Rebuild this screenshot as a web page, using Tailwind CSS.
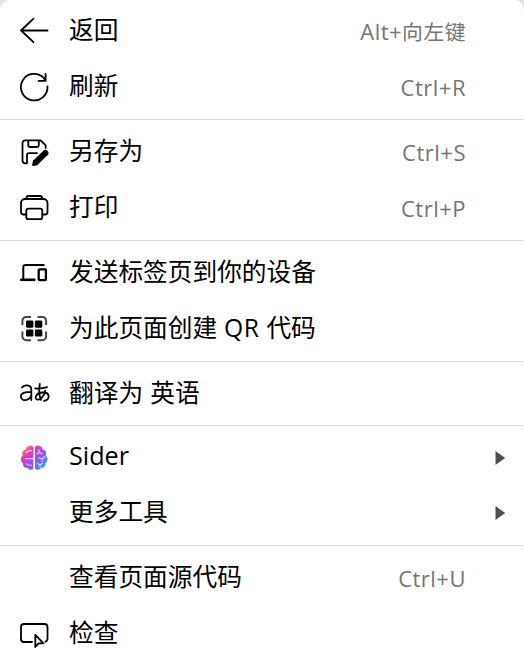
<!DOCTYPE html>
<html lang="zh-CN">
<head>
    <meta charset="UTF-8">
    <meta name="viewport" content="width=device-width, initial-scale=1.0">
    <title>右键菜单</title>
    <script src="https://cdn.jsdelivr.net/npm/@tailwindcss/browser@4"></script>
</head>
<body class="bg-[#e3e3e3] overflow-hidden">
    <div class="w-[524px] h-[661px] pt-0.5 bg-white rounded-t-[10px] overflow-hidden text-[24.7px] leading-[56px] text-black whitespace-nowrap font-['Open_Sans','Noto_Sans_CJK_SC',sans-serif]">
        <!-- Navegación -->
        <div class="flex h-14 pl-3.5 pr-[58px]">
            <svg class="w-10 h-14 mr-[15px]" viewBox="0 0 40 56" fill="none" stroke="#000" stroke-width="1.8" stroke-linecap="round" stroke-linejoin="round">
                <path d="M33.5 28.5H7M19.5 16.7L7 28.5L19.5 40.2"/>
            </svg>
            <span>返回</span>
            <span class="ml-auto pt-px text-[22px] tracking-[0.5px] text-[#757575]">Alt+<span class="text-[20.8px]">向左键</span></span>
        </div>
        <div class="flex h-14 pl-3.5 pr-[58px]">
            <svg class="w-10 h-14 mr-[15px]" viewBox="0 0 40 56" fill="none" stroke="#000" stroke-width="1.8" stroke-linecap="round" stroke-linejoin="round">
                <path d="M33.5 28.5A13.3 13.3 0 1 1 29.5 19.6L31.5 22.7M31.6 16V22.9H24.5"/>
            </svg>
            <span>刷新</span>
            <span class="ml-auto pt-px text-[22px] tracking-[0.5px] text-[#757575]">Ctrl+R</span>
        </div>
        <div class="h-px mt-[5px] mb-[3px] bg-[#d9d9d9]"></div>

        <!-- Guardar e imprimir -->
        <div class="flex h-14 pl-3.5 pr-[58px]">
            <svg class="w-10 h-14 mr-[15px]" viewBox="0 0 40 56" fill="none" stroke="#000" stroke-width="1.8" stroke-linecap="round" stroke-linejoin="round">
                <path d="M13 40.3H11.2A2.7 2.7 0 0 1 8.5 37.6V20A2.7 2.7 0 0 1 11.2 17.3H26.6L31.7 22.4V25M14.3 17.5V22.2A1.8 1.8 0 0 0 16.1 24H23A1.8 1.8 0 0 0 24.8 22.2V17.5M13 40V32.2A2 2 0 0 1 15 30.2H23"/>
                <path d="M22 39.2L31.4 30" stroke-width="6"/>
                <path d="M19 42L20 37.7L23.3 41Z" fill="#000"/>
            </svg>
            <span>另存为</span>
            <span class="ml-auto pt-px text-[22px] tracking-[0.5px] text-[#757575]">Ctrl+S</span>
        </div>
        <div class="flex h-14 pl-3.5 pr-[58px]">
            <svg class="w-10 h-14 mr-[15px]" viewBox="0 0 40 56" fill="none" stroke="#000" stroke-width="1.8" stroke-linecap="round" stroke-linejoin="round">
                <path d="M12.3 35.5H9.5A2.5 2.5 0 0 1 7 33V24A4 4 0 0 1 11 20H29.5A4 4 0 0 1 33.5 24V33A2.5 2.5 0 0 1 31 35.5H28.3M12.3 20V19.5A2.5 2.5 0 0 1 14.8 17H25.8A2.5 2.5 0 0 1 28.3 19.5V20"/>
                <rect x="12.3" y="29.7" width="16" height="10.5" rx="2.3"/>
            </svg>
            <span>打印</span>
            <span class="ml-auto pt-px text-[22px] tracking-[0.5px] text-[#757575]">Ctrl+P</span>
        </div>
        <div class="h-px mt-[5px] mb-[3px] bg-[#d9d9d9]"></div>

        <!-- Compartir -->
        <div class="flex h-14 pl-3.5 pr-[58px]">
            <svg class="w-10 h-14 mr-[15px]" viewBox="0 0 40 56" fill="none" stroke="#000" stroke-width="2">
                <path d="M9.3 35V23A2 2 0 0 1 11.3 21H30.5"/>
                <path d="M6.2 35.8H21.4" stroke-width="2.6"/>
                <rect x="24.7" y="25.3" width="7.2" height="10.8" rx="0.8" stroke-width="2.3"/>
            </svg>
            <span>发送标签页到你的设备</span>
        </div>
        <div class="flex h-14 pl-3.5 pr-[58px]">
            <svg class="w-10 h-14 mr-[15px]" viewBox="0 0 40 56" fill="none" stroke="#444" stroke-width="2">
                <path d="M8.4 25V20.9A4 4 0 0 1 12.4 16.9H17M23.5 16.9H28.1A4 4 0 0 1 32.1 20.9V25M32.1 31.5V36.2A4 4 0 0 1 28.1 40.2H23.5M17 40.2H12.4A4 4 0 0 1 8.4 36.2V31.5"/>
                <g fill="#000" stroke="none">
                    <rect x="12" y="20.6" width="7.4" height="7.2" rx="1.3"/>
                    <rect x="20.9" y="20.6" width="7.4" height="7.2" rx="1.3"/>
                    <rect x="12" y="29.4" width="7.4" height="7.2" rx="1.3"/>
                    <rect x="20.9" y="29.4" width="7.4" height="7.2" rx="1.3"/>
                </g>
            </svg>
            <span>为此页面创建<span class="tracking-[0.5px]"> QR </span>代码</span>
        </div>
        <div class="h-px mt-[5px] mb-[3px] bg-[#d9d9d9]"></div>

        <!-- Traducir -->
        <div class="flex h-14 pl-3.5 pr-[58px]">
            <svg class="w-10 h-14 mr-[15px]" viewBox="0 0 40 56" fill="none" stroke="#000" stroke-width="1.8" stroke-linecap="round" stroke-linejoin="round">
                <path d="M8 22.5C10 19.8 17.3 18.9 17.3 24.7V35M17.3 26.8C12 26.8 6.8 27.3 6.8 31.3C6.8 36.8 15.3 36.2 17.3 30.3"/>
                <path d="M21.2 23.3C25 24 29 23.5 33 22.2M25.8 19C24.8 24.5 25.1 30.5 27 34.8M31.2 25.7C30.2 31 26.4 35.3 23.4 34.6C19.8 33.8 22 27.8 28.2 27.5C36.8 27.1 36.2 34.8 30 35.8"/>
            </svg>
            <span>翻译为<span class="tracking-[0.7px]"> </span>英语</span>
        </div>
        <div class="h-px my-[3.5px] bg-[#d9d9d9]"></div>

        <!-- Extensiones y herramientas -->
        <div class="flex items-center h-14 pl-3.5 pr-[18px]">
            <svg class="w-10 h-14 mr-[15px]" viewBox="0 0 40 56" fill="none">
                <defs>
                    <linearGradient id="brain" x1="10" y1="18" x2="31" y2="40" gradientUnits="userSpaceOnUse">
                        <stop offset="0" stop-color="#ff9146"/>
                        <stop offset="0.25" stop-color="#ed35c0"/>
                        <stop offset="0.55" stop-color="#9650f4"/>
                        <stop offset="1" stop-color="#24a6ff"/>
                    </linearGradient>
                </defs>
                <path fill="url(#brain)" d="M19.4 18.3V39.6C18.5 41.3 14.5 41.5 13.4 38.8C10.3 39.3 8.5 36.7 9.1 34.4C6.3 32.8 6.2 28.1 8.7 26.5C7.4 23.6 8.9 20.8 11.6 20.4C12.7 16.4 18 15.9 19.4 18.3ZM21 18.3V39.6C21.9 41.3 25.9 41.5 27 38.8C30.1 39.3 31.9 36.7 31.3 34.4C34.1 32.8 34.2 28.1 31.7 26.5C33 23.6 31.5 20.8 28.8 20.4C27.7 16.4 22.4 15.9 21 18.3Z"/>
                <path stroke="#fff" stroke-opacity="0.75" stroke-width="1.1" stroke-linecap="round" d="M12.5 24C13.2 21.8 15.2 21.5 17.7 21.7M11 29.6H19.2M12.5 34.8C13.5 36.2 15.5 36.5 17.3 36M24.7 20.5L25.4 23.5L23 25M25.4 23.5L28.2 24.7M24.5 28.8L28 30L31 27.5M28 30V32M23.5 34.5L26 36L28.5 34.2M26 36V38"/>
            </svg>
            <span class="pb-1 text-[25.2px]">Sider</span>
            <svg class="w-[11px] h-3.5 ml-auto mt-0.5" viewBox="0 0 11 14"><path d="M0.5 0L10.2 7L0.5 14Z" fill="#4f4f4f"/></svg>
        </div>
        <div class="flex items-center h-14 pl-[69px] pr-[18px]">
            <span class="pb-0.5">更多工具</span>
            <svg class="w-[11px] h-3.5 ml-auto" viewBox="0 0 11 14"><path d="M0.5 0L10.2 7L0.5 14Z" fill="#4f4f4f"/></svg>
        </div>
        <div class="h-px mt-1 mb-[3px] bg-[#d9d9d9]"></div>

        <!-- Desarrollador -->
        <div class="flex h-14 pl-[69px] pr-[58px]">
            <span>查看页面源代码</span>
            <span class="ml-auto pt-px text-[22px] tracking-[0.5px] text-[#757575]">Ctrl+U</span>
        </div>
        <div class="flex h-14 pl-3.5 pr-[58px]">
            <svg class="w-10 h-14 mr-[15px]" viewBox="0 0 40 56" fill="none" stroke="#000" stroke-width="1.8" stroke-linecap="round" stroke-linejoin="round">
                <path d="M18 37H10A3 3 0 0 1 7 34V22A3 3 0 0 1 10 19H30.5A3 3 0 0 1 33.5 22V34A3 3 0 0 1 31.5 36.7"/>
                <path d="M21.3 29.8V42L24.6 38.3H29.5Z"/>
            </svg>
            <span>检查</span>
        </div>
    </div>
</body>
</html>
